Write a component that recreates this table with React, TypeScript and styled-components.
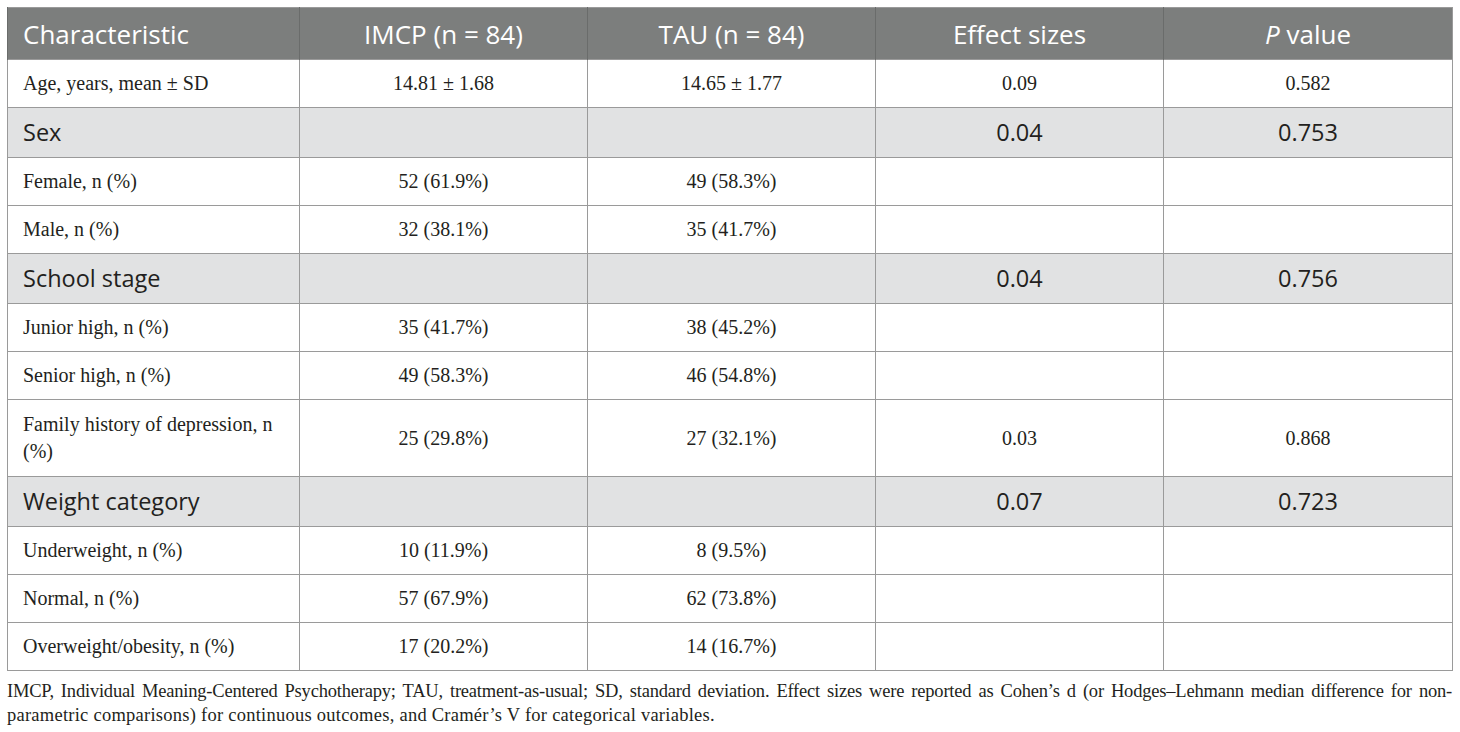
import styled, { createGlobalStyle } from 'styled-components';

const GlobalStyle = createGlobalStyle`
  body {
    margin: 0;
    background: #ffffff;
  }
`;

const Page = styled.div`
  padding: 7px 8px 0 7px;
  width: 1445px;
`;

const Table = styled.table`
  width: 1445px;
  border-collapse: collapse;
  table-layout: fixed;
  border: 1px solid #9a9a9a;
`;

const HeadCell = styled.th<{ $left?: boolean }>`
  height: 51px;
  padding: 0 15px;
  background: #7c7e7d;
  color: #ffffff;
  font-family: 'Open Sans', 'Noto Sans', sans-serif;
  font-size: 26px;
  font-weight: 400;
  text-align: ${({ $left }) => ($left ? 'left' : 'center')};
  border-left: 1px solid #6a6c6b;
  vertical-align: middle;
`;

const Row = styled.tr<{ $section?: boolean; $tall?: boolean }>`
  height: ${({ $section, $tall }) => ($tall ? '77px' : $section ? '50px' : '48px')};
  background: ${({ $section }) => ($section ? '#e1e2e3' : '#ffffff')};
`;

const Cell = styled.td<{ $left?: boolean; $section?: boolean }>`
  padding: 0 15px;
  border: 1px solid #9a9a9a;
  color: #231f20;
  font-family: ${({ $section }) =>
    $section ? "'Open Sans', 'Noto Sans', sans-serif" : "'Liberation Serif', 'Times New Roman', serif"};
  font-size: ${({ $section }) => ($section ? '23.5px' : '20px')};
  line-height: 27px;
  text-align: ${({ $left }) => ($left ? 'left' : 'center')};
  vertical-align: middle;
`;

const Footnote = styled.div`
  margin-top: 8px;
  font-family: 'Liberation Serif', 'Times New Roman', serif;
  font-size: 18.5px;
  line-height: 24px;
  color: #231f20;
`;

const FootLine = styled.span<{ $full?: boolean }>`
  display: block;
  white-space: nowrap;
  letter-spacing: ${({ $full }) => ($full ? '-0.2px' : '0.25px')};
  text-align: ${({ $full }) => ($full ? 'justify' : 'left')};
  text-align-last: ${({ $full }) => ($full ? 'justify' : 'left')};
`;

type RowData = {
  label: string;
  values: [string, string, string, string];
  section?: boolean;
  tall?: boolean;
};

const rows: RowData[] = [
  { label: 'Age, years, mean ± SD', values: ['14.81 ± 1.68', '14.65 ± 1.77', '0.09', '0.582'] },
  { label: 'Sex', values: ['', '', '0.04', '0.753'], section: true },
  { label: 'Female, n (%)', values: ['52 (61.9%)', '49 (58.3%)', '', ''] },
  { label: 'Male, n (%)', values: ['32 (38.1%)', '35 (41.7%)', '', ''] },
  { label: 'School stage', values: ['', '', '0.04', '0.756'], section: true },
  { label: 'Junior high, n (%)', values: ['35 (41.7%)', '38 (45.2%)', '', ''] },
  { label: 'Senior high, n (%)', values: ['49 (58.3%)', '46 (54.8%)', '', ''] },
  {
    label: 'Family history of depression, n (%)',
    values: ['25 (29.8%)', '27 (32.1%)', '0.03', '0.868'],
    tall: true,
  },
  { label: 'Weight category', values: ['', '', '0.07', '0.723'], section: true },
  { label: 'Underweight, n (%)', values: ['10 (11.9%)', '8 (9.5%)', '', ''] },
  { label: 'Normal, n (%)', values: ['57 (67.9%)', '62 (73.8%)', '', ''] },
  { label: 'Overweight/obesity, n (%)', values: ['17 (20.2%)', '14 (16.7%)', '', ''] },
];

const App = () => {
  return (
    <Page>
      <GlobalStyle />
      <Table>
        <colgroup>
          <col style={{ width: 292 }} />
          <col style={{ width: 288 }} />
          <col style={{ width: 288 }} />
          <col style={{ width: 288 }} />
          <col style={{ width: 289 }} />
        </colgroup>
        <thead>
          <tr>
            <HeadCell $left>Characteristic</HeadCell>
            <HeadCell>IMCP (n = 84)</HeadCell>
            <HeadCell>TAU (n = 84)</HeadCell>
            <HeadCell>Effect sizes</HeadCell>
            <HeadCell>
              <i>P</i> value
            </HeadCell>
          </tr>
        </thead>
        <tbody>
          {rows.map((row) => (
            <Row key={row.label} $section={row.section} $tall={row.tall}>
              <Cell $left $section={row.section}>
                {row.label}
              </Cell>
              {row.values.map((v, i) => (
                <Cell key={i} $section={row.section}>
                  {v}
                </Cell>
              ))}
            </Row>
          ))}
        </tbody>
      </Table>
      <Footnote>
        <FootLine $full>
          IMCP, Individual Meaning-Centered Psychotherapy; TAU, treatment-as-usual; SD, standard deviation. Effect
          sizes were reported as Cohen’s d (or Hodges–Lehmann median difference for non-
        </FootLine>
        <FootLine>parametric comparisons) for continuous outcomes, and Cramér’s V for categorical variables.</FootLine>
      </Footnote>
    </Page>
  );
};

export default App;
